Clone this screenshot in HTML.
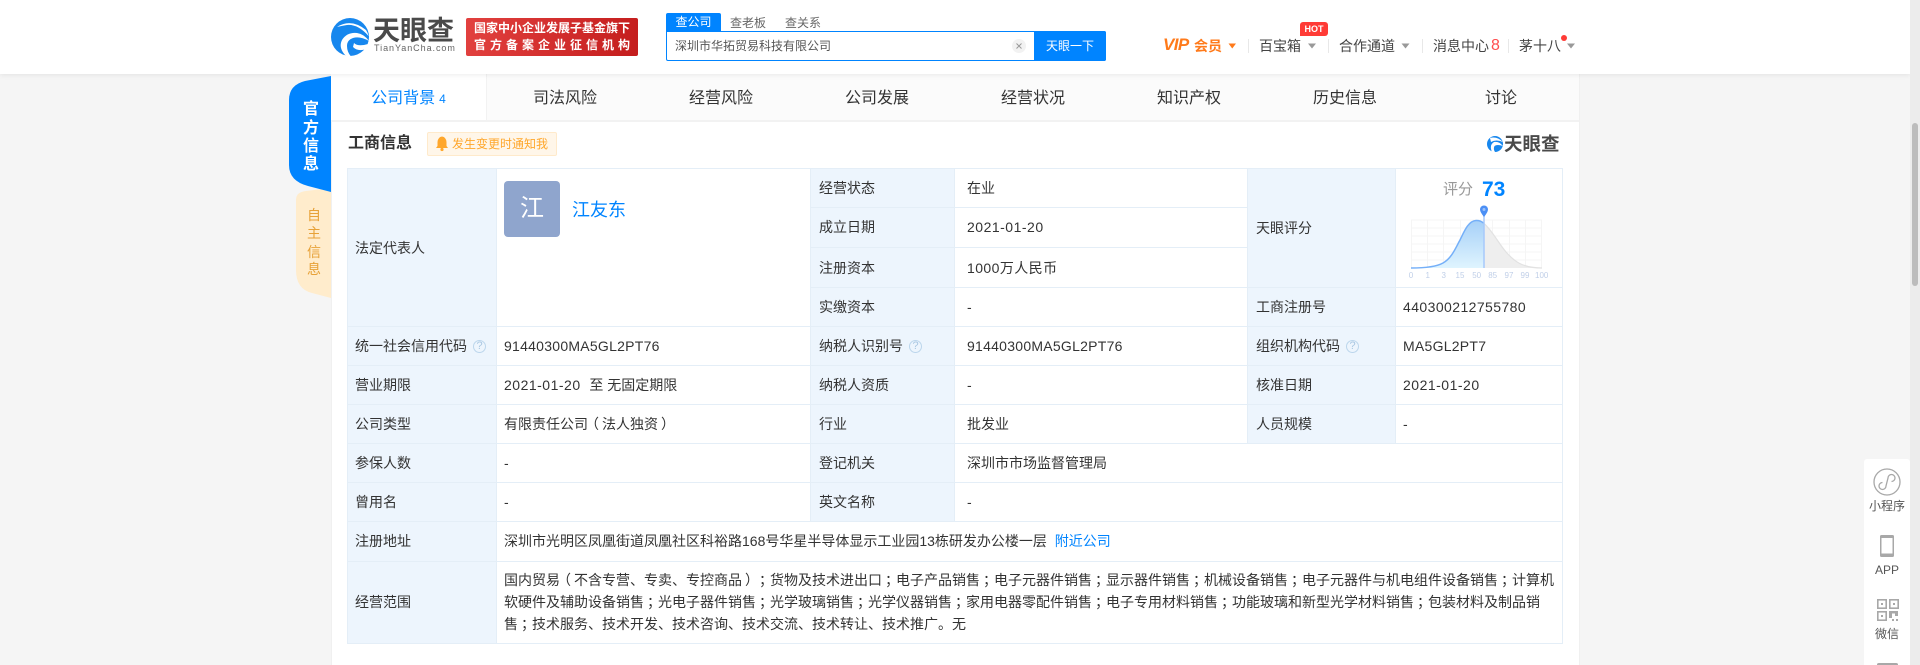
<!DOCTYPE html>
<html lang="zh-CN">
<head>
<meta charset="utf-8">
<title>天眼查 - 深圳市华拓贸易科技有限公司</title>
<style>
*{box-sizing:border-box;margin:0;padding:0}
html,body{width:1920px;height:665px;overflow:hidden;background:#f5f5f5;font-family:"Liberation Sans","Noto Sans CJK SC",sans-serif;color:#333;font-size:14px;text-spacing-trim:space-all}
.a{position:absolute;white-space:nowrap}
#hdr{position:absolute;left:0;top:0;width:1910px;height:74px;background:#fff;box-shadow:0 1px 5px rgba(0,0,0,.08);z-index:5}
#main{position:absolute;left:331px;top:74px;width:1249px;height:591px;background:#fff;border-left:1px solid #f0f0f0;border-right:1px solid #f0f0f0}
#tabs{position:absolute;left:331px;top:74px;width:1248px;height:48px;background:#fbfbfb;border-bottom:2px solid #f2f2f2;z-index:2}
#tabs div{position:absolute;top:0;width:156px;height:46px;line-height:49px;text-align:center;font-size:16px;color:#333}
#tabs .on{background:#fff;color:#0084ff;border-right:1px solid #f2f2f2;height:46px}
#tabs .on i{font-style:normal;font-size:12px;margin-left:4px}
table{position:absolute;left:347px;top:168px;width:1215px;table-layout:fixed;border-collapse:collapse;z-index:2;background:#fff}
td{border:1px solid #e4eef7;padding:0 7px;font-size:14px;color:#333;vertical-align:middle;white-space:nowrap}
td.l{background:#edf5fd;padding-left:8px}
td.f{padding-left:7px}
td.p{padding-left:12px}
td.n{letter-spacing:.42px}
td.d{letter-spacing:.5px}
td.m{letter-spacing:.26px}
.q{display:inline-block;width:13px;height:13px;border:1px solid #bcd6ec;border-radius:50%;color:#a9c7e2;font-size:11px;line-height:11px;text-align:center;margin-left:6px;vertical-align:2px;letter-spacing:0}
.pl{position:relative;left:-3px}
.pr{position:relative;left:3px}
.s{position:relative;left:3px}
a{color:#0084ff;text-decoration:none}
.side{position:absolute;left:1864px;top:459px;width:46px;height:206px;background:#fff;border-radius:3px 3px 0 0;z-index:6}
.side span{position:absolute;width:46px;text-align:center;font-size:12px;color:#555;line-height:14px}
#sb{position:absolute;left:1910px;top:0;width:10px;height:665px;background:#ececec;z-index:7}
#sb i{position:absolute;left:2px;top:123px;width:6px;height:163px;background:#bcbcbc;border-radius:3px}
#ov{position:absolute;left:0;top:0;z-index:8;pointer-events:none}
.z{z-index:9}
</style>
</head>
<body>
<div id="main"></div>

<div id="hdr">
  <div class="a" style="left:373px;top:15px;font-size:27px;line-height:32px;font-weight:700;color:#4a4a4a;letter-spacing:0">天眼查</div>
  <div class="a" style="left:374px;top:43px;font-size:9px;line-height:11px;color:#666;letter-spacing:.95px">TianYanCha.com</div>
  <div class="a" style="left:466px;top:18px;width:172px;height:38px;border-radius:2px;background:linear-gradient(100deg,#e2413f,#c41d1d)"></div>
  <div class="a" style="left:474px;top:20px;font-size:12px;line-height:17px;font-weight:700;color:#fff">国家中小企业发展子基金旗下</div>
  <div class="a" style="left:474px;top:37px;font-size:12px;line-height:17px;font-weight:700;color:#fff;letter-spacing:4px">官方备案企业征信机构</div>

  <div class="a" style="left:666px;top:13px;width:55px;height:18px;background:#0084ff;border-radius:2px 2px 0 0;color:#fff;font-size:12px;line-height:18px;text-align:center">查公司</div>
  <div class="a" style="left:730px;top:14px;font-size:12px;line-height:18px;color:#666">查老板</div>
  <div class="a" style="left:785px;top:14px;font-size:12px;line-height:18px;color:#666">查关系</div>
  <div class="a" style="left:666px;top:31px;width:440px;height:30px;border:1px solid #0084ff;border-radius:0 2px 2px 2px;background:#fff"></div>
  <div class="a" style="left:675px;top:37px;font-size:12px;line-height:18px;color:#555">深圳市华拓贸易科技有限公司</div>
  <div class="a" style="left:1034px;top:31px;width:72px;height:30px;background:#0084ff;border-radius:0 2px 2px 0;color:#fff;font-size:12px;line-height:30px;text-align:center">天眼一下</div>

  <div class="a" style="left:1163px;top:35px;font-size:17px;line-height:20px;font-weight:700;font-style:italic;color:#ff7a1a;letter-spacing:-.6px">VIP</div>
  <div class="a" style="left:1194px;top:36px;font-size:14px;line-height:20px;font-weight:700;color:#ff7a1a">会员</div>
  <div class="a" style="left:1259px;top:36px;font-size:14px;line-height:20px;color:#444">百宝箱</div>
  <div class="a" style="left:1300px;top:22px;width:28px;height:14px;background:#ff3b36;border-radius:3px 3px 3px 0;color:#fff;font-size:9px;font-weight:700;line-height:14px;text-align:center">HOT</div>
  <div class="a" style="left:1339px;top:36px;font-size:14px;line-height:20px;color:#444">合作通道</div>
  <div class="a" style="left:1433px;top:36px;font-size:14px;line-height:20px;color:#444">消息中心</div>
  <div class="a" style="left:1491px;top:36px;font-size:16px;line-height:20px;color:#ff4d4f">8</div>
  <div class="a" style="left:1519px;top:36px;font-size:14px;line-height:20px;color:#444">茅十八</div>
</div>

<div id="tabs">
  <div class="on" style="left:0">公司背景<i>4</i></div>
  <div style="left:156px">司法风险</div>
  <div style="left:312px">经营风险</div>
  <div style="left:468px">公司发展</div>
  <div style="left:624px">经营状况</div>
  <div style="left:780px">知识产权</div>
  <div style="left:936px">历史信息</div>
  <div style="left:1092px">讨论</div>
</div>

<div class="a" style="left:348px;top:133px;font-size:16px;line-height:22px;font-weight:700;color:#333;z-index:2">工商信息</div>
<div class="a" style="left:427px;top:132px;width:130px;height:24px;background:#fff6e9;border:1px solid #ffeacb;border-radius:2px;z-index:2;color:#ffa72c;font-size:12px;line-height:22px;padding-left:24px">发生变更时通知我</div>

<table>
<colgroup><col style="width:149px"><col style="width:314px"><col style="width:144px"><col style="width:293px"><col style="width:148px"><col style="width:167px"></colgroup>
<tr style="height:39px"><td class="l f" rowspan="4">法定代表人</td><td rowspan="4"></td><td class="l">经营状态</td><td class="p">在业</td><td class="l" rowspan="3">天眼评分</td><td rowspan="3"></td></tr>
<tr style="height:40px"><td class="l" style="padding-bottom:2px">成立日期</td><td class="p d" style="padding-bottom:2px">2021-01-20</td></tr>
<tr style="height:40px"><td class="l">注册资本</td><td class="p n">1000万人民币</td></tr>
<tr style="height:39px"><td class="l">实缴资本</td><td class="p">-</td><td class="l">工商注册号</td><td class="n">440300212755780</td></tr>
<tr style="height:39px"><td class="l f">统一社会信用代码<span class="q">?</span></td><td class="m">91440300MA5GL2PT76</td><td class="l">纳税人识别号<span class="q">?</span></td><td class="p m">91440300MA5GL2PT76</td><td class="l">组织机构代码<span class="q">?</span></td><td class="m">MA5GL2PT7</td></tr>
<tr style="height:39px"><td class="l f">营业期限</td><td class="d">2021-01-20&nbsp; <span style="letter-spacing:0">至 无固定期限</span></td><td class="l">纳税人资质</td><td class="p">-</td><td class="l">核准日期</td><td class="d">2021-01-20</td></tr>
<tr style="height:39px"><td class="l f">公司类型</td><td>有限责任公司<span class="pl">（</span>法人独资<span class="pr">）</span></td><td class="l">行业</td><td class="p">批发业</td><td class="l">人员规模</td><td>-</td></tr>
<tr style="height:39px"><td class="l f">参保人数</td><td>-</td><td class="l">登记机关</td><td class="p" colspan="3">深圳市市场监督管理局</td></tr>
<tr style="height:39px"><td class="l f">曾用名</td><td>-</td><td class="l">英文名称</td><td class="p" colspan="3">-</td></tr>
<tr style="height:40px"><td class="l f" style="padding-bottom:2px">注册地址</td><td colspan="5" style="padding-bottom:2px">深圳市光明区凤凰街道凤凰社区科裕路168号华星半导体显示工业园13栋研发办公楼一层&nbsp; <a>附近公司</a></td></tr>
<tr style="height:82px"><td class="l f" style="padding-bottom:2px">经营范围</td><td colspan="5" style="line-height:22px;padding-bottom:2px">国内贸易<span class="pl">（</span>不含专营、专卖、专控商品<span class="pr">）</span><span class="s">；</span>货物及技术进出口<span class="s">；</span>电子产品销售<span class="s">；</span>电子元器件销售<span class="s">；</span>显示器件销售<span class="s">；</span>机械设备销售<span class="s">；</span>电子元器件与机电组件设备销售<span class="s">；</span>计算机<br>软硬件及辅助设备销售<span class="s">；</span>光电子器件销售<span class="s">；</span>光学玻璃销售<span class="s">；</span>光学仪器销售<span class="s">；</span>家用电器零配件销售<span class="s">；</span>电子专用材料销售<span class="s">；</span>功能玻璃和新型光学材料销售<span class="s">；</span>包装材料及制品销<br>售<span class="s">；</span>技术服务、技术开发、技术咨询、技术交流、技术转让、技术推广。无</td></tr>
</table>

<div class="a z" style="left:504px;top:181px;width:56px;height:56px;background:#8fa5cd;border-radius:4px;color:#fff;font-size:24px;line-height:56px;text-align:center">江</div>
<div class="a z" style="left:572px;top:198px;font-size:18px;line-height:24px;color:#0084ff">江友东</div>
<div class="a z" style="left:1443px;top:180px;font-size:15px;line-height:20px;color:#999">评分</div>
<div class="a z" style="left:1482px;top:177px;font-size:21px;line-height:26px;font-weight:700;color:#0084ff">73</div>

<div class="side">
  <span style="top:40px">小程序</span>
  <span style="top:104px">APP</span>
  <span style="top:168px">微信</span>
</div>
<div id="sb"><i></i></div>

<svg id="ov" width="1920" height="665" viewBox="0 0 1920 665" xmlns="http://www.w3.org/2000/svg" style="font-family:'Liberation Sans',sans-serif">
  <defs>
    <linearGradient id="gb" x1="0" y1="0" x2="0" y2="1"><stop offset="0" stop-color="#a6d0f8"/><stop offset="1" stop-color="#dff4fe"/></linearGradient>
    <clipPath id="cl"><rect x="1411" y="215" width="73" height="54"/></clipPath>
    <clipPath id="cr"><rect x="1484" y="215" width="58" height="54"/></clipPath>
  </defs>

  <!-- main logo mark -->
  <circle cx="350" cy="37" r="19" fill="#1787ee"/>
  <path d="M337 27Q351 18 366 30Q368 33 368.500 36Q358 24 347 25Q341 26 337 27Z" fill="#fff"/>
  <path d="M346 56Q338 48 342 40Q347 32 357 33Q364 34 369 41Q360 36 353 38Q347 40 347 46Q347 52 351 56.500Z" fill="#fff"/>
  <path d="M354 43Q358 47 368 44L366 49Q358 52 353 47Z" fill="#fff"/>

  <!-- side tabs -->
  <path d="M331 188L331 298L312 293Q296 289 296 270L296 200Q296 192 306 191Z" fill="#ffeccc"/>
  <path d="M331 76L331 192L308 186Q289 181 289 165L289 100Q289 85 305 81Z" fill="#0084ff"/>
  <g font-family="'Liberation Sans','Noto Sans CJK SC',sans-serif" text-anchor="middle">
    <g fill="#fff" font-size="16" font-weight="700">
      <text x="311" y="114">官</text><text x="311" y="133">方</text><text x="311" y="151">信</text><text x="311" y="169">息</text>
    </g>
    <g fill="#e7a137" font-size="14">
      <text x="314" y="220">自</text><text x="314" y="238">主</text><text x="314" y="257">信</text><text x="314" y="274">息</text>
    </g>
  </g>

  <!-- bell -->
  <path d="M442 136.500Q446 137 446.500 142L446.500 146L448 148L436 148L437.500 146L437.500 142Q438 137 442 136.500Z" fill="#ffa72c"/>
  <circle cx="442" cy="149.500" r="1.600" fill="#ffa72c"/>

  <!-- small logo -->
  <circle cx="1495" cy="144" r="8" fill="#1787ee"/>
  <path d="M1490 138Q1497 136 1503 142Q1496 139 1491 142Z M1492 152Q1489 145 1494 142Q1499 141 1503 146Q1497 144 1494.500 146Q1493 149 1495 152Z" fill="#fff"/>
  <text x="1504" y="150.500" font-family="'Liberation Sans','Noto Sans CJK SC',sans-serif" font-size="18.500" font-weight="700" fill="#4a4a4a">天眼查</text>

  <!-- clear icon -->
  <circle cx="1019" cy="46" r="7" fill="#f2f2f2"/>
  <path d="M1016.500 43.500L1021.500 48.500M1021.500 43.500L1016.500 48.500" stroke="#999" stroke-width="1" fill="none"/>

  <!-- nav carets & separators -->
  <path d="M1228.500 43.500L1236 43.500L1232.250 48.500Z" fill="#ff7a1a"/>
  <path d="M1308 43.500L1316 43.500L1312 48.500Z M1401.500 43.500L1409.500 43.500L1405.500 48.500Z M1567 43.500L1575 43.500L1571 48.500Z" fill="#999"/>
  <path d="M1248.500 39V53M1328.500 39V53M1422.500 39V53M1508.500 39V53" stroke="#e8e8e8" stroke-width="1"/>
  <circle cx="1564" cy="38" r="3" fill="#ff3b36"/>

  <!-- score chart -->
  <g stroke="#f5f5f5" stroke-width="1" fill="none">
    <path d="M1411 220H1542M1411 228H1542M1411 236H1542M1411 244H1542M1411 252H1542M1411 260H1542"/>
    <path d="M1411.500 220V268M1427.500 220V268M1443.500 220V268M1460.500 220V268M1476.500 220V268M1492.500 220V268M1509.500 220V268M1525.500 220V268M1541.500 220V268"/>
  </g>
  <path clip-path="url(#cl)" d="M1411 268C1425 268 1436 267 1443 263C1452 258 1456 247 1460 240C1464 232 1468 221 1476 220.500C1482 220 1486 225 1490 230C1495 236 1500 245 1506 252C1514 261 1522 268 1542 268Z" fill="url(#gb)"/>
  <path clip-path="url(#cr)" d="M1411 268C1425 268 1436 267 1443 263C1452 258 1456 247 1460 240C1464 232 1468 221 1476 220.500C1482 220 1486 225 1490 230C1495 236 1500 245 1506 252C1514 261 1522 268 1542 268Z" fill="#eeeeee"/>
  <path clip-path="url(#cl)" d="M1411 268C1425 268 1436 267 1443 263C1452 258 1456 247 1460 240C1464 232 1468 221 1476 220.500C1482 220 1486 225 1490 230" fill="none" stroke="#74aff8" stroke-width="1.500"/>
  <path clip-path="url(#cr)" d="M1476 220.500C1482 220 1486 225 1490 230C1495 236 1500 245 1506 252C1514 261 1522 268 1542 268" fill="none" stroke="#e2e2e2" stroke-width="1.200"/>
  <path d="M1484 212V268" stroke="#a7c9fb" stroke-width="1.500"/>
  <path d="M1484 205.500A4 4 0 0 1 1488 209.500Q1488 212 1484 217Q1480 212 1480 209.500A4 4 0 0 1 1484 205.500Z" fill="#4b8ff5"/>
  <circle cx="1484" cy="209.500" r="1.500" fill="#9cc2fa"/>
  <g font-size="8" fill="#c0cfe8" text-anchor="middle">
    <text x="1411" y="278">0</text><text x="1427.700" y="278">1</text><text x="1443.700" y="278">3</text><text x="1460" y="278">15</text><text x="1476.700" y="278">50</text><text x="1492.700" y="278">85</text><text x="1509" y="278">97</text><text x="1525" y="278">99</text><text x="1541.700" y="278">100</text>
  </g>

  <!-- side panel icons -->
  <circle cx="1887" cy="482" r="13" fill="none" stroke="#a8a8a8" stroke-width="1.300"/>
  <path d="M1882.500 482.500A3.500 3.500 0 1 0 1886 486L1888 478A3.500 3.500 0 1 1 1891.500 481.500" fill="none" stroke="#a8a8a8" stroke-width="1.300"/>
  <path d="M1881.500 535H1892.500Q1894 535 1894 536.500V555.500Q1894 557 1892.500 557H1881.500Q1880 557 1880 555.500V536.500Q1880 535 1881.500 535ZM1881.500 538V553.500H1892.500V538Z" fill="#a8a8a8" fill-rule="evenodd"/>
  <g fill="none" stroke="#a8a8a8" stroke-width="1.600">
    <rect x="1877.800" y="599.800" width="8.400" height="8.400"/>
    <rect x="1889.800" y="599.800" width="8.400" height="8.400"/>
    <rect x="1877.800" y="611.800" width="8.400" height="8.400"/>
  </g>
  <g fill="#a8a8a8">
    <rect x="1881" y="603" width="2" height="2"/><rect x="1893" y="603" width="2" height="2"/><rect x="1881" y="615" width="2" height="2"/>
    <path d="M1889 611H1898V616H1895V613.500H1892V618H1889Z"/><rect x="1892" y="619" width="2" height="2"/><rect x="1896" y="619" width="2" height="2"/>
  </g>
  <path d="M1877 665V664.500Q1877 663 1879 663H1896Q1898 663 1898 664.500V665Z" fill="#a8a8a8"/>
</svg>
</body>
</html>
